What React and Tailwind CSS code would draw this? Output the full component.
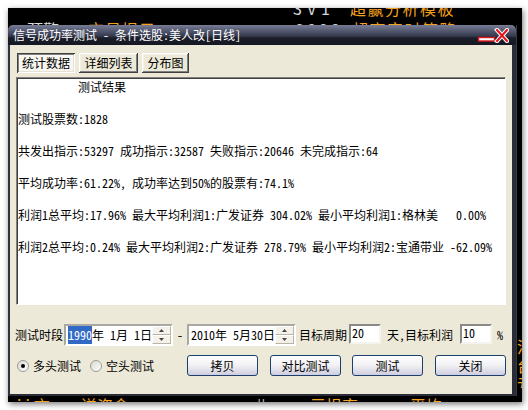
const lines = [
  "测试股票数:1828",
  "共发出指示:53297 成功指示:32587 失败指示:20646 未完成指示:64",
  "平均成功率:61.22%, 成功率达到50%的股票有:74.1%",
  "利润1总平均:17.96% 最大平均利润1:广发证券 304.02% 最小平均利润1:格林美   0.00%",
  "利润2总平均:0.24% 最大平均利润2:广发证券 278.79% 最小平均利润2:宝通带业 -62.09%",
];

const Spin = () => (
  <div className="ml-auto flex h-full w-[19px] flex-col">
    <div className="flex h-1/2 items-center justify-center border border-t-white border-l-white border-r-[#b8b5a6] border-b-[#b8b5a6] bg-[#f3f1ea]">
      <svg width="5" height="3" viewBox="0 0 5 3">
        <path d="M2.5 0L5 3H0z" fill="#444" />
      </svg>
    </div>
    <div className="flex h-1/2 items-center justify-center border border-t-white border-l-white border-r-[#b8b5a6] border-b-[#b8b5a6] bg-[#f3f1ea]">
      <svg width="5" height="3" viewBox="0 0 5 3">
        <path d="M0 0H5L2.5 3z" fill="#444" />
      </svg>
    </div>
  </div>
);

const DateBox = ({ children }) => (
  <div className="flex h-[22px] w-[109px] shrink-0 items-center border-2 border-t-[#a9a8a2] border-l-[#a9a8a2] border-r-white border-b-white bg-white pl-[2px] whitespace-pre">
    {children}
    <Spin />
  </div>
);

const Field = ({ value }) => (
  <div className="h-[20px] w-[32px] shrink-0 border-2 border-t-[#8a8a86] border-l-[#8a8a86] border-r-[#f4f3ee] border-b-[#f4f3ee] bg-white pl-[1px] leading-[14px]">
    {value}
  </div>
);

const Radio = ({ checked, label }) => (
  <div className="flex items-center">
    <div className="flex h-[12px] w-[12px] items-center justify-center rounded-full border border-[#9c9b96] bg-linear-to-br from-[#d9d8d0] to-white">
      {checked && <div className="h-[4px] w-[4px] rounded-full bg-black" />}
    </div>
    <span className="ml-[4px]">{label}</span>
  </div>
);

const XpButton = ({ label, className = "" }) => (
  <button
    type="button"
    className={`flex h-[21px] w-[71px] shrink-0 items-center justify-center rounded-[3px] border border-[#1c3f6e] bg-linear-to-b from-white via-[#f1f0f3] to-[#cfcde0] ${className}`}
  >
    {label}
  </button>
);

const Tab = ({ label, pressed, className = "" }) => (
  <div
    className={`flex h-[20px] items-center justify-center ${className} ${
      pressed
        ? "bg-[#f7f6f1] shadow-[inset_1px_1px_#404040,inset_-1px_-1px_#fff,inset_2px_2px_#808080,inset_-2px_-2px_#e4e1d4]"
        : "bg-[#ece9d8] shadow-[inset_-1px_-1px_#404040,inset_1px_1px_#fff,inset_-2px_-2px_#808080,inset_2px_2px_#f4f2e8]"
    }`}
  >
    {label}
  </div>
);

export default function App() {
  return (
    <div className="h-[410px] w-[528px] overflow-hidden bg-white pt-[8px] pl-[8px] font-['Noto_Sans_Mono_CJK_SC','Noto_Sans_CJK_SC',sans-serif] text-[12px] text-black">
      <div className="flex h-[394px] w-[514px] flex-col overflow-hidden bg-black shadow-[1px_2px_6px_rgba(0,0,0,0.55)]">
        {/* background app peeking out above */}
        <div className="flex h-[17px] shrink-0 flex-col overflow-hidden font-['Noto_Sans_CJK_SC',sans-serif] text-[16px] leading-[16px]">
          <div className="mt-[-8px] flex h-[16px] shrink-0">
            <span className="ml-[285px] w-[57px] shrink-0 tracking-[5px] text-[#d6d6d6]">3V1</span>
            <span className="tracking-[1.5px] text-[#f5a21c]">超赢分析模板</span>
          </div>
          <div className="mt-[5px] flex h-[16px] shrink-0">
            <span className="ml-[19px] w-[61px] shrink-0 text-[#dcdcdc]">预警</span>
            <span className="w-[207px] shrink-0 tracking-[1px] text-[#f5a21c]">交易提示</span>
            <span className="w-[57px] shrink-0 tracking-[3px] text-[#cfcfcf]">8888</span>
            <span className="tracking-[1.5px] text-[#f5a21c]">超高实时策略</span>
          </div>
        </div>

        <div className="flex h-[371px] shrink-0">
          {/* dialog */}
          <div className="flex w-[508px] shrink-0 flex-col">
            <div className="flex h-[20px] shrink-0 items-center rounded-t-[5px] bg-[linear-gradient(to_bottom,#777d95_0%,#4c5168_35%,#353a4d_55%,#1b1e2a_65%,#151822_100%)] pl-[5px] pr-[7px]">
              <span className="pb-[1px] whitespace-pre text-white">信号成功率测试 - 条件选股:美人改[日线]</span>
              <svg className="ml-auto mt-[1px]" width="32" height="15" viewBox="0 0 32 15">
                <rect x="1.5" y="9.5" width="16" height="3.5" fill="#fff" stroke="#e0151a" strokeWidth="1.4" />
                <path d="M20 2L30 13M30 2L20 13" stroke="#fff" strokeWidth="4.2" strokeLinecap="square" />
                <path d="M20 2L30 13M30 2L20 13" stroke="#e3151b" strokeWidth="2" strokeLinecap="square" />
              </svg>
            </div>

            <div className="flex flex-1 flex-col border-l-2 border-r-4 border-b-2 border-l-[#2f323f] border-r-[#2a2c37] border-b-[#2a2c37] bg-[#ece9d8] px-[6px] pt-[8px]">
              <div className="flex h-[20px] gap-[4px] pl-[1px]">
                <Tab label="统计数据" pressed className="w-[58px]" />
                <Tab label="详细列表" className="w-[59px]" />
                <Tab label="分布图" className="w-[47px]" />
              </div>

              <div className="mt-[4px] flex h-[228px] flex-col gap-[16px] border border-t-[#808080] border-l-[#808080] border-r-white border-b-white bg-white leading-[16px] shadow-[inset_1px_1px_#404040] pt-[1px] pl-[1px] whitespace-pre">
                <div className="pl-[60px]">测试结果</div>
                {lines.map((l) => (
                  <div key={l}>{l}</div>
                ))}
              </div>

              <div className="mt-[19px] flex h-[22px] items-center whitespace-pre">
                <span className="ml-[-1px] w-[48px] shrink-0">测试时段</span>
                <div className="ml-[1px]">
                  <DateBox>
                    <span className="bg-[#316ac5] text-white">1990</span>年 1月 1日
                  </DateBox>
                </div>
                <span className="w-[14px] shrink-0 text-center">-</span>
                <DateBox>2010年 5月30日</DateBox>
                <span className="ml-[3px] w-[48px] shrink-0">目标周期</span>
                <div className="ml-[2px] mt-[-2px]">
                  <Field value="20" />
                </div>
                <span className="ml-[6px] w-[66px] shrink-0">天,目标利润</span>
                <div className="ml-[7px] mt-[-2px]">
                  <Field value="10" />
                </div>
                <span className="ml-[5px]">%</span>
              </div>

              <div className="mt-[9px] flex h-[21px] items-center">
                <div className="ml-[1px] flex w-[73px] shrink-0">
                  <Radio checked label="多头测试" />
                </div>
                <div className="flex w-[97px] shrink-0">
                  <Radio label="空头测试" />
                </div>
                <XpButton label="拷贝" />
                <XpButton label="对比测试" className="ml-[12px]" />
                <XpButton label="测试" className="ml-[11px]" />
                <XpButton label="关闭" className="ml-[12px]" />
              </div>
            </div>
          </div>

          {/* background app on the right */}
          <div className="flex w-[6px] shrink-0 flex-col justify-end overflow-hidden border-l border-[#3a3a3a] pb-[2px] font-['Noto_Sans_CJK_SC',sans-serif] text-[16px] leading-[19px] text-[#f5a21c]">
            <span>渭</span>
            <span>台</span>
            <span>亏</span>
          </div>
        </div>

        {/* background app below */}
        <div className="flex h-[6px] shrink-0 overflow-hidden pt-[1px] font-['Noto_Sans_CJK_SC',sans-serif] text-[16px] leading-[16px] text-[#f5a21c]">
          <span className="ml-[9px] w-[64px] shrink-0 tracking-[4px]">ii言</span>
          <span className="w-[176px] shrink-0">送资金</span>
          <span className="w-[53px] shrink-0 text-[#bbbbbb]">||</span>
          <span className="w-[100px] shrink-0">亏损率</span>
          <span>平均</span>
        </div>
      </div>
    </div>
  );
}
